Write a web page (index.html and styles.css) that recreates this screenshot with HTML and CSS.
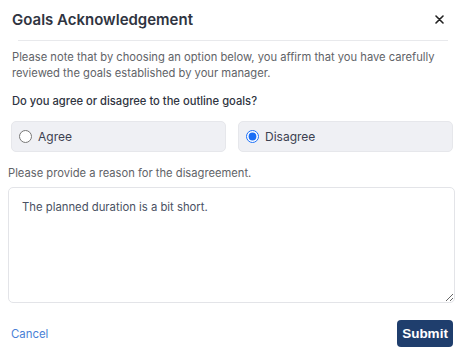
FILE: index.html
```html
<!DOCTYPE html>
<html lang="en">
<head>
  <meta charset="UTF-8" />
  <title>Goals Acknowledgement</title>
  <link rel="stylesheet" href="styles.css">
</head>
<body>

  <div class="modal">
    <div class="modal-header">
      <h2>Goals Acknowledgement</h2>
      <button class="close" aria-label="Close">
        <svg width="9" height="9" viewBox="0 0 9 9"><path d="M1 1L8 8M8 1L1 8" stroke="#222" stroke-width="1.6" stroke-linecap="round"/></svg>
      </button>
    </div>
    <div class="divider"></div>

    <div class="modal-body">
      <p class="note">Please note that by choosing an option below, you affirm that you have carefully reviewed the goals established by your manager.</p>
      <p class="question">Do you agree or disagree to the outline goals?</p>

      <div class="options">
        <label class="option"><input type="radio" name="choice" value="agree" /> Agree</label>
        <label class="option"><input type="radio" name="choice" value="disagree" checked /> Disagree</label>
      </div>

      <p class="reason-label">Please provide a reason for the disagreement.</p>
      <textarea name="reason">The planned duration is a bit short.</textarea>
    </div>

    <div class="modal-footer">
      <a href="#" class="cancel">Cancel</a>
      <button type="submit" class="submit">Submit</button>
    </div>
  </div>

</body>
</html>
```

FILE: styles.css
```css
* {
  box-sizing: border-box;
}

body {
  margin: 0;
  font-family: Inter, 'Noto Sans', sans-serif;
  background: white;
  color: #333;
}

.modal {
  width: 463px;
  padding: 0 8px;
}

.modal-header {
  display: flex;
  justify-content: space-between;
  align-items: center;
  height: 40px;
  padding: 0 11px 2px 4px;
}

.modal-header h2 {
  margin: 0;
  font-size: 15px;
  font-weight: 600;
  color: #2f3441;
}

.close {
  background: none;
  border: none;
  padding: 0;
  display: flex;
  cursor: pointer;
}

.divider {
  height: 1px;
  background: #e8e9ec;
  margin: 0 7px 0 10px;
}

.note {
  margin: 8px 0 0 4px;
  font-size: 11.2px;
  line-height: 16px;
  color: #5f6368;
}

.question {
  margin: 12px 0 0 4px;
  font-size: 11.2px;
  line-height: 16px;
  font-weight: 500;
  color: #2f3441;
}

.options {
  display: grid;
  grid-template-columns: 1fr 1fr;
  gap: 12px;
  margin: 12px 0 0;
  padding: 0 2px 0 3px;
}

.option {
  display: flex;
  align-items: center;
  gap: 6px;
  height: 31px;
  padding: 0 7px;
  background: #eff0f4;
  border: 1px solid #e6e7eb;
  border-radius: 5px;
  font-size: 12px;
  color: #3c4150;
  cursor: pointer;
}

.option input {
  margin: 0;
  width: 13px;
  height: 13px;
  accent-color: #1a6ef5;
}

.reason-label {
  margin: 13px 0 0;
  font-size: 11.2px;
  line-height: 16px;
  color: #5f6368;
}

textarea {
  display: block;
  width: 100%;
  height: 116px;
  margin-top: 6px;
  padding: 11px 13px;
  border: 1px solid #e3e4e8;
  border-radius: 5px;
  font-family: Inter, 'Noto Sans', sans-serif;
  font-size: 11.3px;
  line-height: 16px;
  color: #4a5163;
  resize: vertical;
}

.modal-footer {
  display: flex;
  justify-content: space-between;
  align-items: center;
  margin-top: 17px;
  padding: 0 2px 0 3px;
}

.cancel {
  font-size: 11.4px;
  color: #4a7fd6;
  text-decoration: none;
}

.submit {
  height: 27px;
  width: 56px;
  padding: 0;
  border: none;
  border-radius: 4px;
  background: #1f3e6d;
  color: white;
  font-family: 'Liberation Sans', Arial, sans-serif;
  font-weight: bold;
  font-size: 13.5px;
  cursor: pointer;
}
```
